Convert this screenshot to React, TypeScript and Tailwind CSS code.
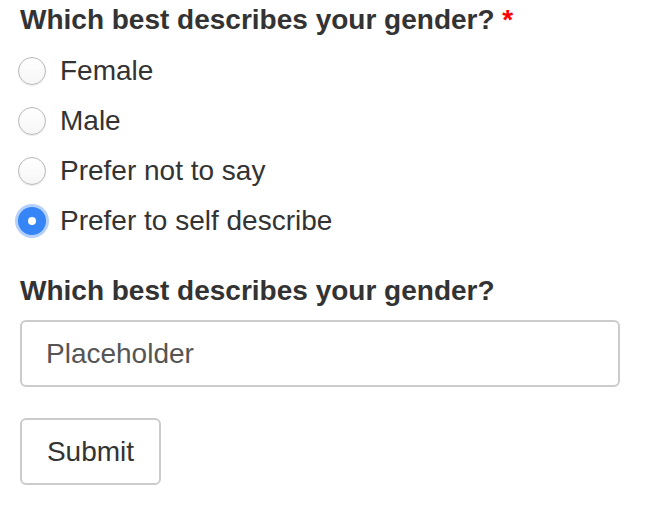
import { useState } from "react";

const options = ["Female", "Male", "Prefer not to say", "Prefer to self describe"];

const Radio = ({ checked }: { checked: boolean }) => {
  if (checked) {
    return (
      <span className="flex h-[28px] w-[28px] shrink-0 items-center justify-center rounded-full bg-[#3585f6] shadow-[0_0_0_3px_rgba(90,150,245,0.45)]">
        <span className="h-[8px] w-[8px] rounded-full bg-white"></span>
      </span>
    );
  }
  return (
    <span className="block h-[28px] w-[28px] shrink-0 rounded-full border border-[#b8b8b8] bg-gradient-to-b from-white to-[#f6f6f6] shadow-[0_1px_1px_rgba(0,0,0,0.08)]"></span>
  );
};

export default function App() {
  const [selected, setSelected] = useState(3);

  return (
    <div className="min-h-[520px] bg-white pl-[20px] text-[#333] font-['Liberation_Sans','Helvetica',sans-serif]">
      <h2 className="text-[28px] font-bold leading-[40px]">
        Which best describes your gender? <span className="text-[#ff0000]">*</span>
      </h2>

      <div className="mt-[6px] flex flex-col">
        {options.map((opt, i) => (
          <label
            key={opt}
            className="-ml-[2px] flex h-[50px] cursor-pointer items-center gap-[14px]"
            onClick={() => setSelected(i)}
          >
            <Radio checked={selected === i} />
            <span className="text-[28px] leading-[40px]">{opt}</span>
          </label>
        ))}
      </div>

      <h2 className="mt-[25px] text-[28px] font-bold leading-[40px]">Which best describes your gender?</h2>

      <input
        type="text"
        placeholder="Placeholder"
        className="mt-[9px] block h-[67px] w-[600px] rounded-[6px] border-2 border-[#cccccc] px-[24px] text-[28px] text-[#333] outline-none placeholder:text-[#555]"
      />

      <button className="mt-[31px] block h-[67px] w-[141px] rounded-[6px] border-2 border-[#cccccc] bg-white text-[28px] text-[#333]">
        Submit
      </button>
    </div>
  );
}
